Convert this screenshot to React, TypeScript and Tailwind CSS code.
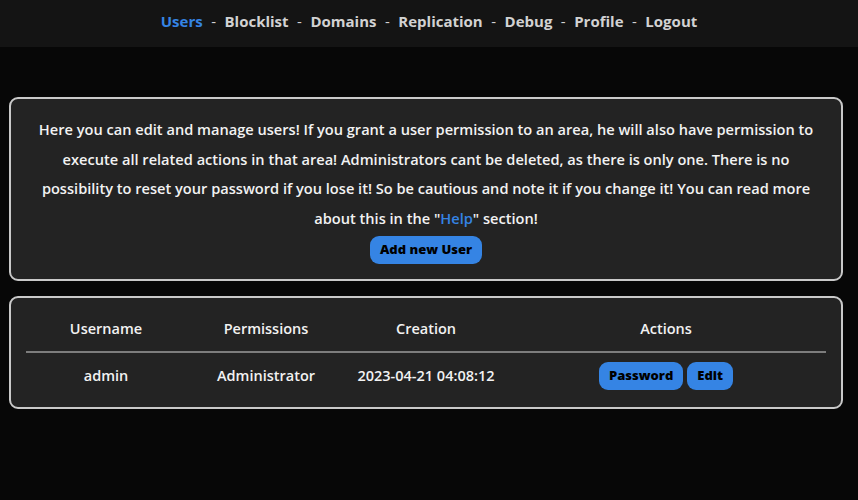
import React from "react";

const navItems = ["Users", "Blocklist", "Domains", "Replication", "Debug", "Profile", "Logout"];

function Nav() {
  return (
    <nav className="flex h-[47px] items-center justify-center bg-[#141414] pb-[4px] text-[15px] font-bold text-[#d2d2d2]">
      {navItems.map((item, i) => (
        <React.Fragment key={item}>
          {i > 0 ? <span className="mx-[8.5px] font-normal">-</span> : null}
          <a href="#" className={i === 0 ? "text-[#3584e4]" : ""}>
            {item}
          </a>
        </React.Fragment>
      ))}
    </nav>
  );
}

function BlueButton({ children }: { children: React.ReactNode }) {
  return (
    <button
      type="button"
      className="h-[28px] rounded-[9px] bg-[#3584e4] px-[10px] text-[13px] font-extrabold text-black"
    >
      {children}
    </button>
  );
}

export default function App() {
  return (
    <div
      className="min-h-[500px] bg-[#070707] text-[#f2f2f2]"
      style={{ fontFamily: "'Open Sans', 'Noto Sans', sans-serif" }}
    >
      <Nav />
      <main className="flex flex-col gap-[15px] pl-[9px] pr-[15px] pt-[50px]">
        <section className="flex flex-col items-center rounded-[9px] border-2 border-[#c9c9c9] bg-[#232323] px-[16px] pt-[16px] pb-[15px]">
          <p className="text-center text-[14.6px] font-semibold leading-[29.5px]">
            Here you can edit and manage users! If you grant a user permission to an area, he will also have permission to
            <br />
            execute all related actions in that area! Administrators cant be deleted, as there is only one. There is no
            <br />
            possibility to reset your password if you lose it! So be cautious and note it if you change it! You can read more
            <br />
            about this in the "<a href="#" className="text-[#3584e4]">Help</a>" section!
          </p>
          <div className="mt-[3px]">
            <BlueButton>Add new User</BlueButton>
          </div>
        </section>

        <section className="rounded-[9px] border-2 border-[#c9c9c9] bg-[#232323] px-[15px] pt-[20px] pb-[17px]">
          <div className="grid grid-cols-[1fr_1fr_1fr_2fr] border-b-2 border-[#7d7d7d] pb-[11px] text-center text-[14.5px] font-semibold">
            <div>Username</div>
            <div>Permissions</div>
            <div>Creation</div>
            <div>Actions</div>
          </div>
          <div className="grid grid-cols-[1fr_1fr_1fr_2fr] items-center pt-[9px] text-center text-[14.5px] font-semibold">
            <div>admin</div>
            <div>Administrator</div>
            <div>2023-04-21 04:08:12</div>
            <div className="flex justify-center gap-[4px]">
              <BlueButton>Password</BlueButton>
              <BlueButton>Edit</BlueButton>
            </div>
          </div>
        </section>
      </main>
    </div>
  );
}
